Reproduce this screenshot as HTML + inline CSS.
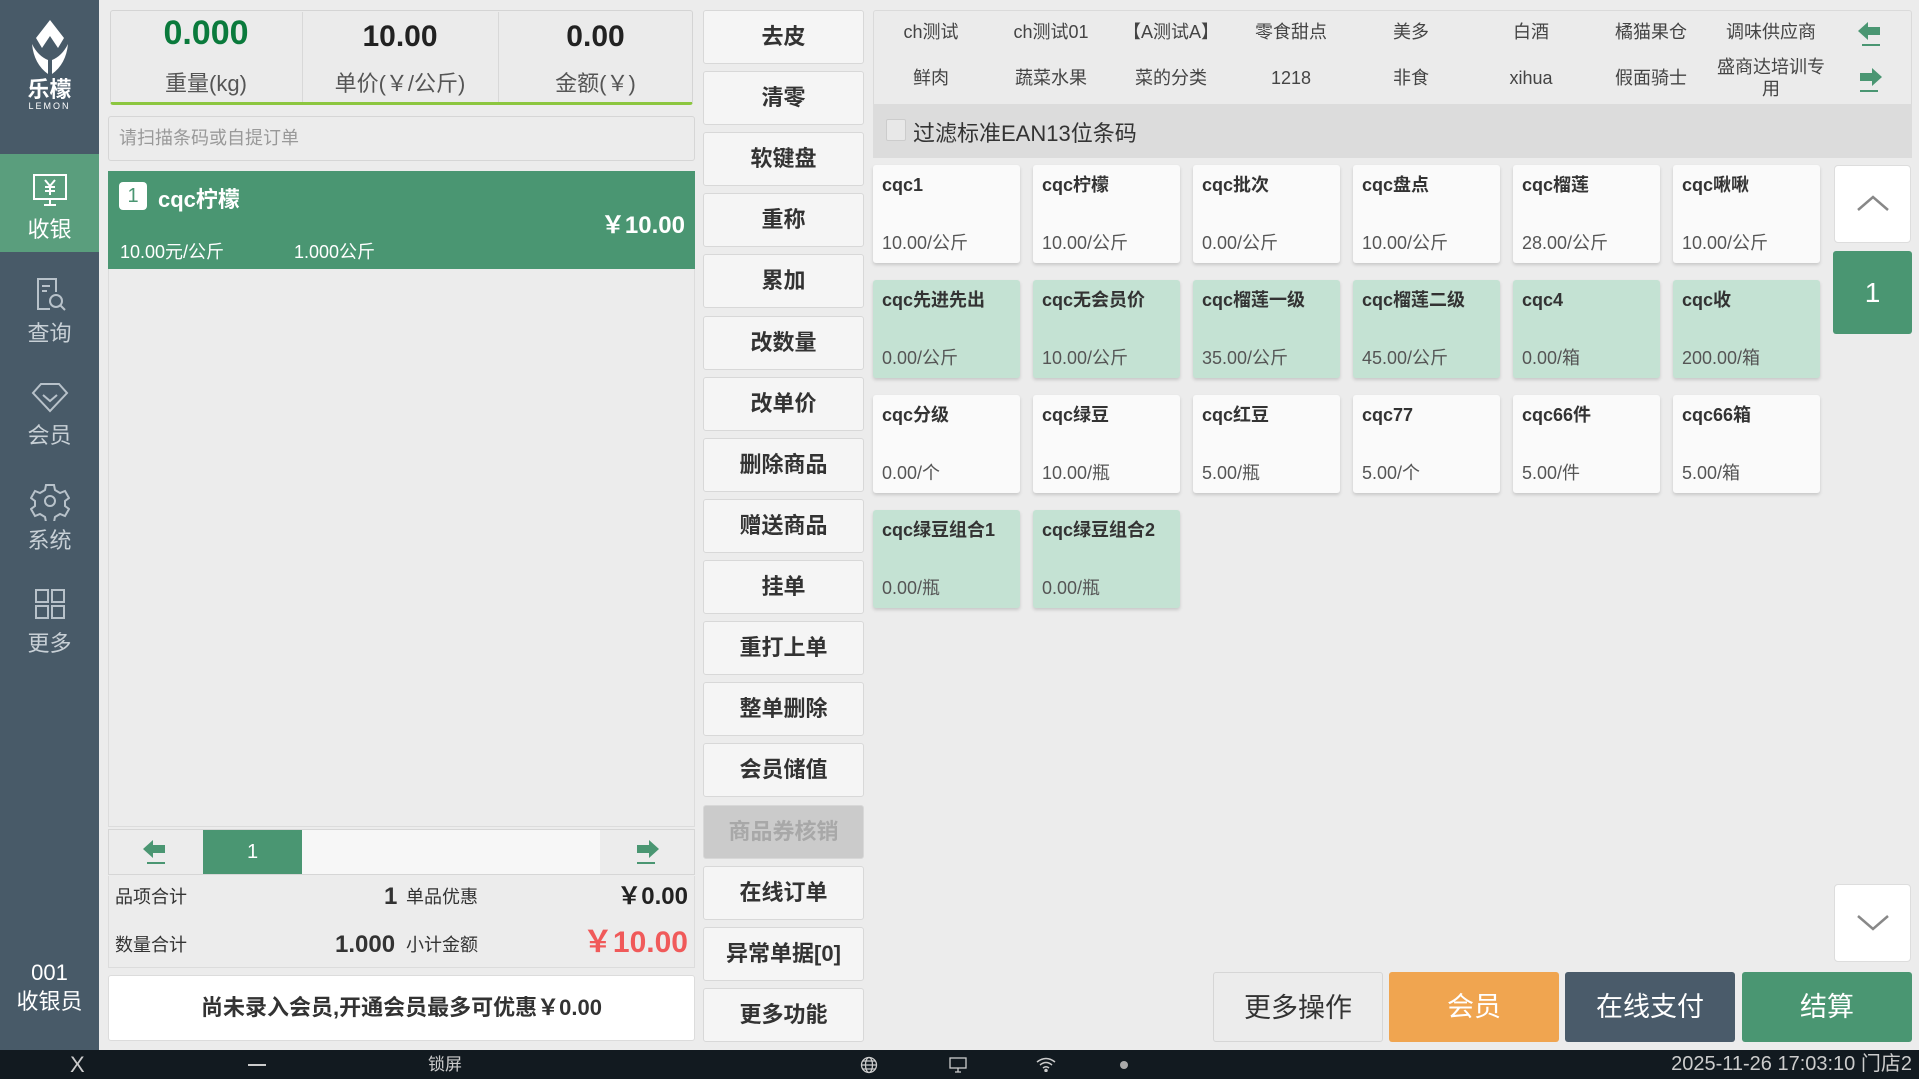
<!DOCTYPE html>
<html><head><meta charset="utf-8"><style>
*{box-sizing:border-box;margin:0;padding:0}
body{width:1919px;height:1079px;overflow:hidden;background:#ececec;font-family:"Liberation Sans","Noto Sans CJK SC",sans-serif;position:relative;color:#333}
.a{position:absolute}
.side{left:0;top:0;width:99px;height:1050px;background:#485a68}
.nav{left:0;width:99px;height:100px;color:#c8d0d6;text-align:center;font-size:22px}
.nav svg{display:block;margin:18px auto 2px}
.btn{left:703px;width:161px;height:54px;background:#f5f5f5;border:1px solid #d8d8d8;border-radius:3px;text-align:center;line-height:52px;font-size:22px;font-weight:bold;color:#333}
.cat{width:120px;text-align:center;font-size:18px;color:#444;line-height:22px}
.tile{width:147px;height:98px;border-radius:3px;background:#fafafa;box-shadow:0 2px 3px #c8c8c8}
.tile b{position:absolute;left:9px;top:8px;font-size:18px;line-height:24px;height:24px;color:#333}
.tile span{position:absolute;left:9px;top:66px;font-size:18px;line-height:24px;color:#555}
.g{background:#c4e2d3}
.bb{top:972px;width:170px;height:70px;border-radius:3px;text-align:center;line-height:70px;font-size:27px;color:#fff}
.sm{line-height:30px;height:30px}
</style></head><body>
<div class="a side"></div>
<svg class="a" style="left:28px;top:18px" width="44" height="58" viewBox="0 0 44 58"><path d="M22 2 L8 20 L14 30 L22 18 L30 30 L36 20 Z" fill="#fff"/><path d="M4 26 Q6 46 20 56 L20 42 Q10 38 4 26Z M40 26 Q38 46 24 56 L24 42 Q34 38 40 26Z" fill="#fff"/></svg>
<div class="a" style="left:0;top:78px;width:99px;text-align:center;color:#fff;font-size:22px;font-weight:bold;line-height:24px">乐檬</div>
<div class="a" style="left:0;top:101px;width:99px;text-align:center;color:#fff;font-size:9px;letter-spacing:2px">LEMON</div>
<div class="a nav" style="top:154px;height:98px;background:#5a9e7d;color:#fff"><svg width="40" height="38" viewBox="0 0 40 38" fill="none" stroke="#fff" stroke-width="2"><rect x="4" y="3" width="32" height="24"/><path d="M14 33h12M20 27v6M15 8l5 6 5-6M20 14v9M15 15h10M15 19h10"/></svg>收银</div>
<div class="a nav" style="top:256px"><svg width="40" height="40" viewBox="0 0 40 40" fill="none" stroke="#b8c2ca" stroke-width="2"><path d="M26 18V5H8v30h12"/><path d="M12 12h8M12 17h5"/><circle cx="26" cy="27" r="6"/><path d="M30 31l5 5"/></svg>查询</div>
<div class="a nav" style="top:360px"><svg width="40" height="38" viewBox="0 0 40 38" fill="none" stroke="#b8c2ca" stroke-width="2"><path d="M11 6h18l8 9-17 18L3 15z"/><path d="M13 17l7 6 7-6"/></svg>会员</div>
<div class="a nav" style="top:463px"><svg width="40" height="40" viewBox="0 0 40 40" fill="none" stroke="#b8c2ca" stroke-width="2"><path d="M16 4h8l1 5 5 3 5-2 4 7-4 3v5l4 3-4 7-5-2-5 3-1 5h-8l-1-5-5-3-5 2-4-7 4-3v-5l-4-3 4-7 5 2 5-3z"/><circle cx="20" cy="20" r="5"/></svg>系统</div>
<div class="a nav" style="top:566px"><svg width="40" height="40" viewBox="0 0 40 40" fill="none" stroke="#b8c2ca" stroke-width="2"><rect x="6" y="6" width="12" height="12"/><rect x="22" y="6" width="12" height="12"/><rect x="6" y="22" width="12" height="12"/><rect x="22" y="22" width="12" height="12"/></svg>更多</div>
<div class="a" style="left:0;top:958px;width:99px;text-align:center;color:#fff;font-size:22px;line-height:29px">001<br>收银员</div>

<div class="a" style="left:110px;top:10px;width:583px;height:95px;background:#ebebeb;border:1px solid #d4d4d4;border-bottom:3px solid #8cc63f;border-radius:3px"></div>
<div class="a" style="left:302px;top:12px;width:1px;height:90px;background:#d8d8d8"></div>
<div class="a" style="left:498px;top:12px;width:1px;height:90px;background:#d8d8d8"></div>
<div class="a" style="left:110px;top:14px;width:192px;text-align:center;font-size:34px;font-weight:bold;color:#0a7a3c">0.000</div>
<div class="a" style="left:302px;top:20px;width:196px;text-align:center;font-size:30px;font-weight:bold;color:#222">10.00</div>
<div class="a" style="left:498px;top:20px;width:195px;text-align:center;font-size:30px;font-weight:bold;color:#222">0.00</div>
<div class="a" style="left:110px;top:66px;width:192px;text-align:center;font-size:22px;color:#555">重量(kg)</div>
<div class="a" style="left:302px;top:66px;width:196px;text-align:center;font-size:22px;color:#555">单价(￥/公斤)</div>
<div class="a" style="left:498px;top:66px;width:195px;text-align:center;font-size:22px;color:#555">金额(￥)</div>

<div class="a" style="left:108px;top:116px;width:587px;height:45px;background:#ececec;border:1px solid #d6d6d6;border-radius:3px;font-size:18px;color:#999;line-height:43px;padding-left:10px">请扫描条码或自提订单</div>
<div class="a" style="left:108px;top:171px;width:587px;height:656px;background:#ececec;border:1px solid #dcdcdc"></div>
<div class="a" style="left:108px;top:171px;width:587px;height:98px;background:#4a9672"></div>
<div class="a" style="left:119px;top:182px;width:28px;height:28px;background:#fff;border-radius:4px;text-align:center;line-height:28px;font-size:20px;color:#4a9672">1</div>
<div class="a" style="left:158px;top:182px;font-size:22px;font-weight:bold;color:#fff">cqc柠檬</div>
<div class="a" style="left:560px;top:205px;width:125px;text-align:right;font-size:24px;font-weight:bold;color:#fff">￥10.00</div>
<div class="a" style="left:120px;top:238px;font-size:18px;color:#fff">10.00元/公斤</div>
<div class="a" style="left:294px;top:238px;font-size:18px;color:#fff">1.000公斤</div>

<div class="a" style="left:108px;top:829px;width:587px;height:46px;background:#ececec;border:1px solid #d6d6d6"></div>
<div class="a" style="left:203px;top:830px;width:99px;height:44px;background:#4a9672;color:#fff;text-align:center;line-height:44px;font-size:20px">1</div>
<div class="a" style="left:302px;top:830px;width:298px;height:44px;background:#f7f7f7"></div>
<svg class="a" style="left:141px;top:838px" width="28" height="28" viewBox="0 0 28 28"><path d="M2 11l10-9v5h12v8H12v5z" fill="#4a9672"/><path d="M6 25h18" stroke="#4a9672" stroke-width="2"/></svg>
<svg class="a" style="left:633px;top:838px" width="28" height="28" viewBox="0 0 28 28"><path d="M26 11l-10-9v5H4v8h12v5z" fill="#4a9672"/><path d="M4 25h18" stroke="#4a9672" stroke-width="2"/></svg>
<div class="a" style="left:108px;top:876px;width:587px;height:92px;border:1px solid #dcdcdc;border-top:0"></div>
<div class="a sm" style="left:115px;top:882px;font-size:18px">品项合计</div>
<div class="a sm" style="left:384px;top:882px;font-size:24px;font-weight:bold">1</div>
<div class="a sm" style="left:406px;top:882px;font-size:18px">单品优惠</div>
<div class="a sm" style="left:560px;top:882px;width:128px;text-align:right;font-size:24px;font-weight:bold;color:#222">￥0.00</div>
<div class="a sm" style="left:115px;top:930px;font-size:18px">数量合计</div>
<div class="a sm" style="left:335px;top:930px;font-size:24px;font-weight:bold">1.000</div>
<div class="a sm" style="left:406px;top:930px;font-size:18px">小计金额</div>
<div class="a sm" style="left:540px;top:928px;width:148px;text-align:right;font-size:30px;font-weight:bold;color:#f05a5a">￥10.00</div>
<div class="a" style="left:108px;top:975px;width:587px;height:66px;background:#fff;border:1px solid #dcdcdc;border-radius:3px;text-align:center;line-height:64px;font-size:22px;font-weight:bold;color:#333">尚未录入会员,开通会员最多可优惠￥0.00</div>

<div class="a btn" style="top:10px">去皮</div>
<div class="a btn" style="top:71px">清零</div>
<div class="a btn" style="top:132px">软键盘</div>
<div class="a btn" style="top:193px">重称</div>
<div class="a btn" style="top:254px">累加</div>
<div class="a btn" style="top:316px">改数量</div>
<div class="a btn" style="top:377px">改单价</div>
<div class="a btn" style="top:438px">删除商品</div>
<div class="a btn" style="top:499px">赠送商品</div>
<div class="a btn" style="top:560px">挂单</div>
<div class="a btn" style="top:621px">重打上单</div>
<div class="a btn" style="top:682px">整单删除</div>
<div class="a btn" style="top:743px">会员储值</div>
<div class="a btn" style="top:805px;background:#cbcbcb;color:#a8a8a8">商品券核销</div>
<div class="a btn" style="top:866px">在线订单</div>
<div class="a btn" style="top:927px">异常单据[0]</div>
<div class="a btn" style="top:988px">更多功能</div>

<div class="a" style="left:873px;top:10px;width:1039px;height:148px;background:#ebebeb;border:1px solid #dadada;border-radius:3px"></div>
<div class="a" style="left:873px;top:104px;width:1039px;height:54px;background:#dcdcdc"></div>
<div class="a" style="left:886px;top:119px;width:20px;height:22px;border:1px solid #ccc;background:#e8e8e8;border-radius:2px"></div>
<div class="a" style="left:913px;top:116px;font-size:22px;color:#333">过滤标准EAN13位条码</div>
<div class="a cat" style="left:871px;top:21px">ch测试</div>
<div class="a cat" style="left:991px;top:21px">ch测试01</div>
<div class="a cat" style="left:1111px;top:21px">【A测试A】</div>
<div class="a cat" style="left:1231px;top:21px">零食甜点</div>
<div class="a cat" style="left:1351px;top:21px">美多</div>
<div class="a cat" style="left:1471px;top:21px">白酒</div>
<div class="a cat" style="left:1591px;top:21px">橘猫果仓</div>
<div class="a cat" style="left:1711px;top:21px">调味供应商</div>
<div class="a cat" style="left:871px;top:67px">鲜肉</div>
<div class="a cat" style="left:991px;top:67px">蔬菜水果</div>
<div class="a cat" style="left:1111px;top:67px">菜的分类</div>
<div class="a cat" style="left:1231px;top:67px">1218</div>
<div class="a cat" style="left:1351px;top:67px">非食</div>
<div class="a cat" style="left:1471px;top:67px">xihua</div>
<div class="a cat" style="left:1591px;top:67px">假面骑士</div>
<div class="a cat" style="left:1711px;top:56px">盛商达培训专<br>用</div>
<svg class="a" style="left:1856px;top:20px" width="28" height="28" viewBox="0 0 28 28"><path d="M2 11l10-9v5h12v8H12v5z" fill="#4a9672"/><path d="M6 25h18" stroke="#4a9672" stroke-width="2"/></svg>
<svg class="a" style="left:1856px;top:66px" width="28" height="28" viewBox="0 0 28 28"><path d="M26 11l-10-9v5H4v8h12v5z" fill="#4a9672"/><path d="M4 25h18" stroke="#4a9672" stroke-width="2"/></svg>

<div class="a tile" style="left:873px;top:165px"><b>cqc1</b><span>10.00/公斤</span></div>
<div class="a tile" style="left:1033px;top:165px"><b>cqc柠檬</b><span>10.00/公斤</span></div>
<div class="a tile" style="left:1193px;top:165px"><b>cqc批次</b><span>0.00/公斤</span></div>
<div class="a tile" style="left:1353px;top:165px"><b>cqc盘点</b><span>10.00/公斤</span></div>
<div class="a tile" style="left:1513px;top:165px"><b>cqc榴莲</b><span>28.00/公斤</span></div>
<div class="a tile" style="left:1673px;top:165px"><b>cqc啾啾</b><span>10.00/公斤</span></div>
<div class="a tile g" style="left:873px;top:280px"><b>cqc先进先出</b><span>0.00/公斤</span></div>
<div class="a tile g" style="left:1033px;top:280px"><b>cqc无会员价</b><span>10.00/公斤</span></div>
<div class="a tile g" style="left:1193px;top:280px"><b>cqc榴莲一级</b><span>35.00/公斤</span></div>
<div class="a tile g" style="left:1353px;top:280px"><b>cqc榴莲二级</b><span>45.00/公斤</span></div>
<div class="a tile g" style="left:1513px;top:280px"><b>cqc4</b><span>0.00/箱</span></div>
<div class="a tile g" style="left:1673px;top:280px"><b>cqc收</b><span>200.00/箱</span></div>
<div class="a tile" style="left:873px;top:395px"><b>cqc分级</b><span>0.00/个</span></div>
<div class="a tile" style="left:1033px;top:395px"><b>cqc绿豆</b><span>10.00/瓶</span></div>
<div class="a tile" style="left:1193px;top:395px"><b>cqc红豆</b><span>5.00/瓶</span></div>
<div class="a tile" style="left:1353px;top:395px"><b>cqc77</b><span>5.00/个</span></div>
<div class="a tile" style="left:1513px;top:395px"><b>cqc66件</b><span>5.00/件</span></div>
<div class="a tile" style="left:1673px;top:395px"><b>cqc66箱</b><span>5.00/箱</span></div>
<div class="a tile g" style="left:873px;top:510px"><b>cqc绿豆组合1</b><span>0.00/瓶</span></div>
<div class="a tile g" style="left:1033px;top:510px"><b>cqc绿豆组合2</b><span>0.00/瓶</span></div>

<div class="a" style="left:1834px;top:165px;width:77px;height:78px;background:#fff;border:1px solid #ddd;border-radius:4px"></div>
<svg class="a" style="left:1856px;top:194px" width="34" height="20" viewBox="0 0 34 20"><path d="M2 16L17 3l15 13" fill="none" stroke="#888" stroke-width="2.5"/></svg>
<div class="a" style="left:1833px;top:251px;width:79px;height:83px;background:#4a9672;border-radius:3px;color:#fff;text-align:center;line-height:83px;font-size:28px">1</div>
<div class="a" style="left:1834px;top:884px;width:77px;height:78px;background:#fff;border:1px solid #ddd;border-radius:4px"></div>
<svg class="a" style="left:1856px;top:912px" width="34" height="20" viewBox="0 0 34 20"><path d="M2 4l15 13L32 4" fill="none" stroke="#888" stroke-width="2.5"/></svg>

<div class="a bb" style="left:1213px;background:#ececec;border:1px solid #d6d6d6;color:#333">更多操作</div>
<div class="a bb" style="left:1389px;background:#f0a550">会员</div>
<div class="a bb" style="left:1565px;background:#4a5b6a">在线支付</div>
<div class="a bb" style="left:1742px;background:#4a9672">结算</div>

<div class="a" style="left:0;top:1050px;width:1919px;height:29px;background:#121a20"></div>
<div class="a" style="left:70px;top:1050px;color:#ccc;font-size:22px;line-height:29px">X</div>
<div class="a" style="left:248px;top:1064px;width:18px;height:2px;background:#ccc"></div>
<div class="a" style="left:428px;top:1050px;color:#ccc;font-size:17px;line-height:29px">锁屏</div>
<svg class="a" style="left:860px;top:1056px" width="18" height="18" viewBox="0 0 18 18" fill="none" stroke="#ccc" stroke-width="1.3"><circle cx="9" cy="9" r="7.5"/><ellipse cx="9" cy="9" rx="3.5" ry="7.5"/><path d="M1.5 9h15M3 5h12M3 13h12"/></svg>
<svg class="a" style="left:948px;top:1057px" width="20" height="16" viewBox="0 0 20 16" fill="none" stroke="#ccc" stroke-width="1.3"><rect x="2" y="1" width="16" height="10"/><path d="M7 15h6M10 11v4"/></svg>
<svg class="a" style="left:1036px;top:1057px" width="20" height="15" viewBox="0 0 20 15" fill="none" stroke="#ccc" stroke-width="1.5"><path d="M1 5q9-7 18 0M4 8q6-5 12 0M7 11q3-2.5 6 0"/><circle cx="10" cy="13.5" r="1" fill="#ccc"/></svg>
<div class="a" style="left:1120px;top:1061px;width:8px;height:8px;border-radius:50%;background:#aaa"></div>
<div class="a" style="left:1550px;top:1050px;width:362px;text-align:right;color:#ccc;font-size:20px;line-height:29px">2025-11-26 17:03:10 门店2</div>
</body></html>
